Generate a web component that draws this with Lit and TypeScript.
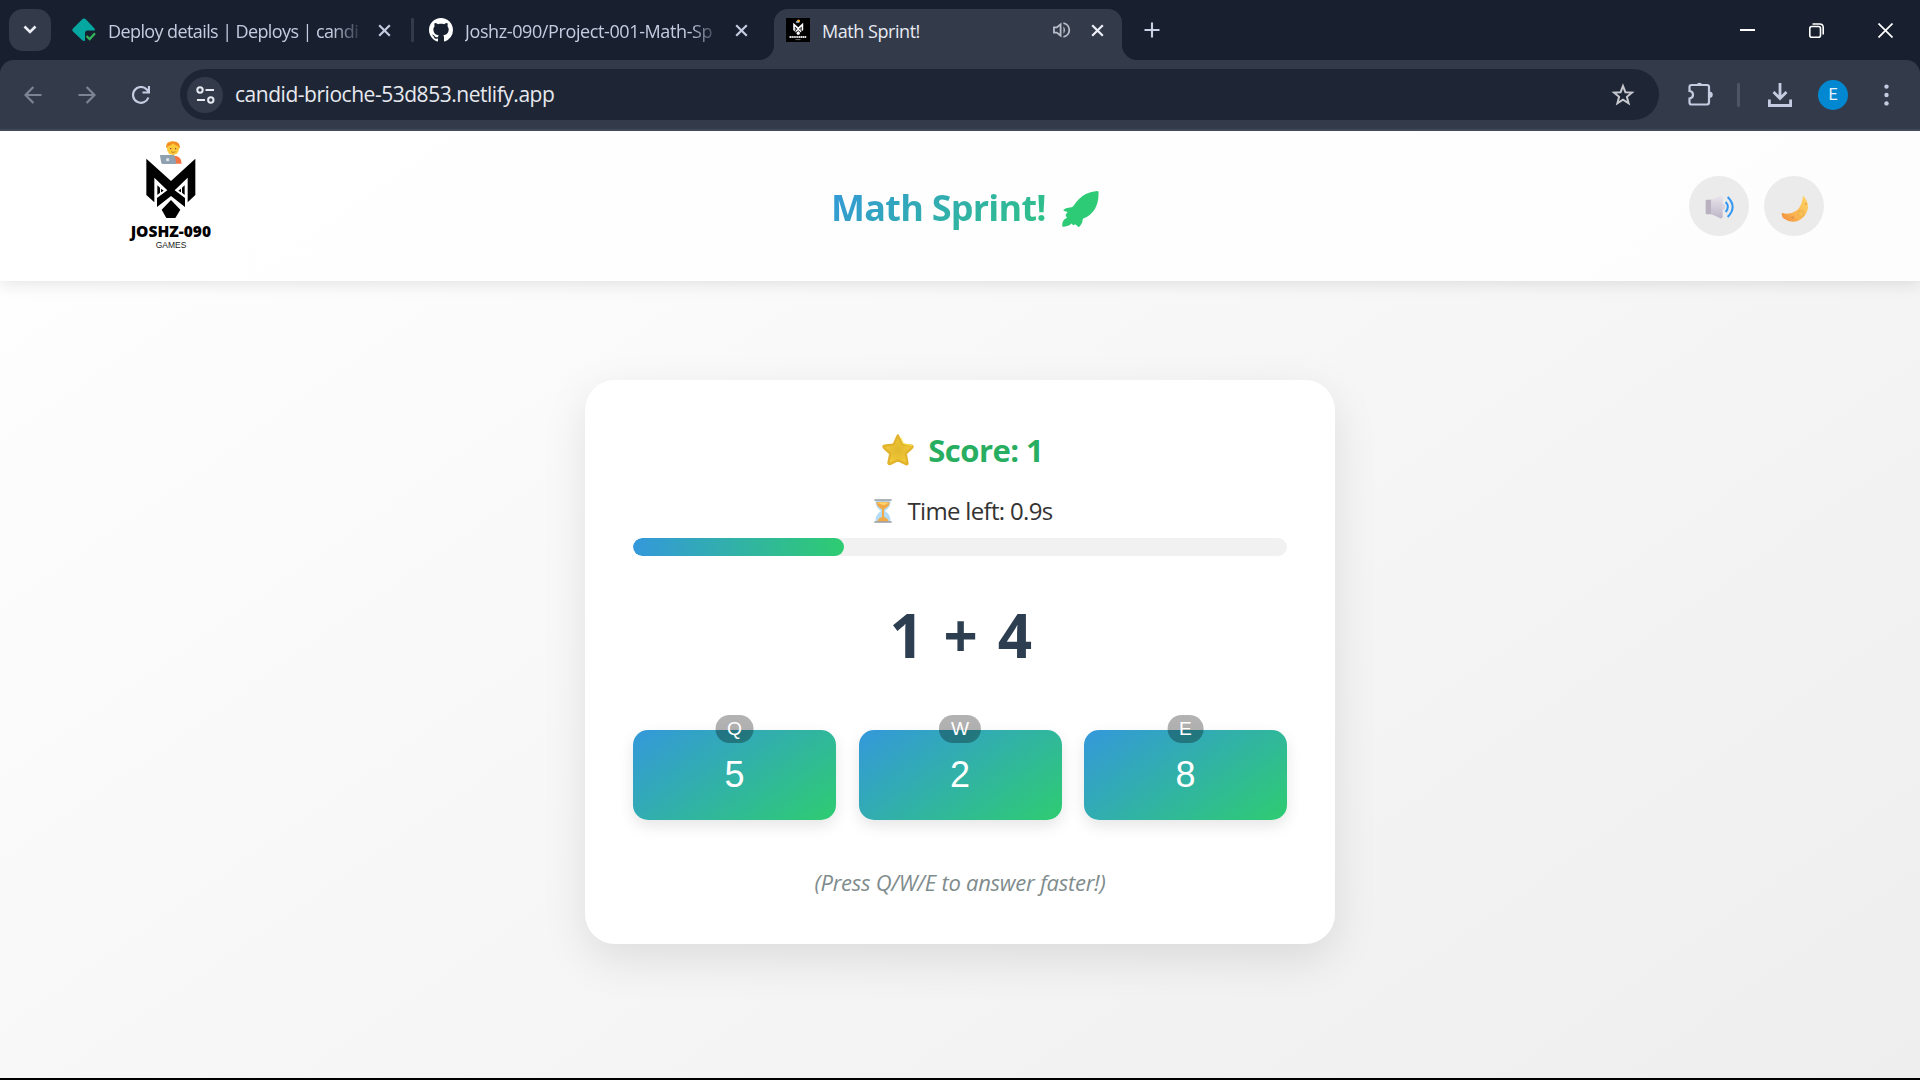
import { LitElement, html, css, svg } from "lit";
import { customElement, property } from "lit/decorators.js";
import { styleMap } from "lit/directives/style-map.js";

const wolf = svg`
  <path d="M109 86L183 153L256 86V195L233 217V143L194 181L225 204V231L183 198L141 231V204L172 181L133 143V217L109 195Z" fill="currentColor"/>
  <path d="M142 166L150 173V188L142 195ZM153 176L161 182L153 187ZM224 166L216 173V188L224 195ZM213 176L205 182L213 187Z" fill="currentColor"/>
  <path d="M183 210L211 239L196 264H169L155 239Z" fill="currentColor"/>
`;

@customElement("browser-tabs")
class BrowserTabs extends LitElement {
  static styles = css`
    :host { display: flex; height: 60px; background: #182030; color: #c5cbe0; align-items: center; font: 18px/30px "Open Sans", "Noto Sans", sans-serif; }
    svg { display: block; flex: none; }
    .search { width: 42px; height: 42px; border-radius: 14px; background: #333b4b; margin-left: 9px; display: grid; place-items: center; color: #eceef5; }
    .tab { display: flex; align-items: center; height: 60px; box-sizing: border-box; }
    .first { margin-left: 21px; width: 339px; }
    .second { margin-left: 15px; width: 345px; }
    .label { white-space: nowrap; margin-left: 12px; width: 254px; letter-spacing: -0.6px; padding-top: 2px; }
    .second .label { letter-spacing: -0.39px; }
    .fade { -webkit-mask-image: linear-gradient(90deg, #000 225px, transparent 256px); mask-image: linear-gradient(90deg, #000 225px, transparent 256px); }
    .x { margin-left: 16px; }
    .rule { width: 3px; height: 24px; background: #333b4b; border-radius: 1px; }
    .active { align-self: flex-end; height: 51px; width: 348px; background: #333b4b; border-radius: 14px 14px 0 0; padding: 0 0 9px 12px; color: #e8eaf2; position: relative; }
    .active .label { width: 231px; letter-spacing: -0.45px; margin-left: 12px; }
    .active .x { margin-left: 20px; }
    .active::before, .active::after { content: ""; position: absolute; bottom: 0; width: 15px; height: 15px; }
    .active::before { left: -15px; background: radial-gradient(circle at 0 0, transparent 14.5px, #333b4b 15.5px); }
    .active::after { right: -15px; background: radial-gradient(circle at 100% 0, transparent 14.5px, #333b4b 15.5px); }
    .plus { margin-left: 22px; }
    .window { margin-left: auto; margin-right: 27px; display: flex; gap: 54px; color: #fff; }
  `;
  private close() {
    return svg`<svg class="x" width="13" height="13" viewBox="0 0 13 13"><path d="M1.2 1.2L11.8 11.8M11.8 1.2L1.2 11.8" stroke="currentColor" stroke-width="2.2" fill="none"/></svg>`;
  }
  render() {
    return html`
      <div class="search"><svg width="14" height="10" viewBox="0 0 14 10"><path d="M1.5 1.5L7 7L12.5 1.5" fill="none" stroke="currentColor" stroke-width="2.6"/></svg></div>
      <div class="tab first">
        <svg width="24" height="24" viewBox="0 0 24 24">
          <path d="M10 1.6Q12 -.4 14 1.6L22.5 10.5Q23.4 12 22.5 12.5H15Q13 12.5 13 15V22.5Q12 23.8 10 22L1 13.6Q-.4 12 1 10.4Z" fill="#05a7a0"/>
          <path d="M14.5 18L17.7 21L23 15.2" stroke="#31b45a" stroke-width="2.3" fill="none"/>
        </svg>
        <span class="label fade">Deploy details | Deploys | candi</span>
        ${this.close()}
      </div>
      <div class="rule"></div>
      <div class="tab second">
        <svg width="24" height="24" viewBox="0 0 16 16"><path fill="#fff" d="M8 0C3.58 0 0 3.58 0 8c0 3.54 2.29 6.53 5.47 7.59.4.07.55-.17.55-.38 0-.19-.01-.82-.01-1.49-2.01.37-2.53-.49-2.69-.94-.09-.23-.48-.94-.82-1.13-.28-.15-.68-.52-.01-.53.63-.01 1.08.58 1.23.82.72 1.21 1.87.87 2.33.66.07-.52.28-.87.51-1.07-1.78-.2-3.64-.89-3.64-3.95 0-.87.31-1.59.82-2.15-.08-.2-.36-1.02.08-2.12 0 0 .67-.21 2.2.82.64-.18 1.32-.27 2-.27s1.36.09 2 .27c1.53-1.04 2.2-.82 2.2-.82.44 1.1.16 1.92.08 2.12.51.56.82 1.27.82 2.15 0 3.07-1.87 3.75-3.65 3.95.29.25.54.73.54 1.48 0 1.07-.01 1.93-.01 2.2 0 .21.15.46.55.38A8.01 8.01 0 0 0 16 8c0-4.42-3.58-8-8-8"/></svg>
        <span class="label fade">Joshz-090/Project-001-Math-Sp</span>
        ${this.close()}
      </div>
      <div class="tab active">
        <svg width="24" height="24" viewBox="0 0 24 24" color="#fff">
          <rect width="24" height="24" fill="#000"/>
          <circle cx="12.5" cy="3" r="1.6" fill="#fbb52d"/><path d="M10 3.2h3v1.6h-3z" fill="#9bb7c8"/>
          <g transform="translate(-.2 -1.2) scale(.068)">${wolf}</g>
          <path d="M3.5 19H20.5" stroke="#ddd" stroke-width="1.8" stroke-dasharray="1.5 .4"/><path d="M9.500 21.600H14.500" stroke="#888" stroke-width=".8"/>
        </svg>
        <span class="label">Math Sprint!</span>
        <svg width="18" height="18" viewBox="0 0 19 18" fill="none" stroke="#b9becb" stroke-width="1.900"><path d="M1 6.300H4L8 3V15L4 11.700H1Z"/><path d="M11 5Q14.500 9 11 13Z" fill="#b9becb" stroke="none"/><path d="M11 1.700A7.400 7.400 0 0 1 11 16.300"/></svg>
        <svg width="13" height="13" viewBox="0 0 13 13" class="x"><path d="M1.200 1.200L11.800 11.800M11.800 1.200L1.200 11.800" stroke="#eef0f7" stroke-width="2.200"/></svg>
      </div>
      <svg class="plus" width="16" height="16" viewBox="0 0 16 16"><path d="M8 .500V15.500M.500 8H15.500" stroke="#cbd1e5" stroke-width="2.100"/></svg>
      <div class="window">
        <svg width="15" height="15" viewBox="0 0 15 15"><path d="M0 7H15" stroke="currentColor" stroke-width="2"/></svg>
        <svg width="15" height="15" viewBox="0 0 15 15" fill="none" stroke="currentColor" stroke-width="1.600"><rect x=".8" y="3.500" width="10.700" height="10.700" rx="2"/><path d="M3.500 1H10.500Q14.200 1 14.200 4.500V11.500"/></svg>
        <svg width="15" height="15" viewBox="0 0 15 15"><path d="M.500 .500L14.500 14.500M14.500 .500L.500 14.500" stroke="currentColor" stroke-width="1.700"/></svg>
      </div>
    `;
  }
}

@customElement("browser-toolbar")
class BrowserToolbar extends LitElement {
  static styles = css`
    :host { display: block; background: #182030; }
    svg { display: block; flex: none; }
    .bar { height: 71px; box-sizing: border-box; border-bottom: 2px solid #424a59; background: #333b4b; border-radius: 14px 14px 0 0; display: flex; align-items: center; color: #c5cbe0; padding-left: 24px; }
    .nav { display: flex; gap: 36px; width: 156px; }
    .dim { color: #7d8494; }
    .omnibox { width: 1479px; height: 51px; border-radius: 26px; background: #1e2636; display: flex; align-items: center; box-sizing: border-box; padding: 0 24px 0 7px; }
    .site { width: 36px; height: 36px; border-radius: 50%; background: #333b4b; display: grid; place-items: center; color: #e8eaf2; }
    .url { flex: 1; margin-left: 12px; padding-bottom: 2px; font: 21px/30px "Open Sans", "Noto Sans", sans-serif; color: #e7e9ee; letter-spacing: -0.47px; }
    .puzzle { margin-left: 29px; margin-bottom: 3px; }
    .sep { width: 3px; height: 24px; background: #4d5565; margin-left: 24px; border-radius: 1px; }
    .down { margin-left: 28px; }
    .avatar { width: 30px; height: 30px; border-radius: 50%; background: #0288d1; color: #e6f3fa; margin-left: 26px; text-align: center; font: 16px/30px Roboto, sans-serif; }
    .dots { margin-left: 36px; }
  `;
  render() {
    return html`<div class="bar">
      <div class="nav">
        <svg class="dim" width="18" height="18" viewBox="0 0 18 18" fill="none" stroke="currentColor" stroke-width="2.200"><path d="M17.500 9H1.800M9.400 1L1.500 9L9.400 17"/></svg>
        <svg class="dim" width="18" height="18" viewBox="0 0 18 18" fill="none" stroke="currentColor" stroke-width="2.200"><path d="M.500 9H16.200M8.600 1L16.500 9L8.600 17"/></svg>
        <svg width="18" height="18" viewBox="0 0 18 18" fill="none" stroke="currentColor" stroke-width="2.200"><path d="M16.400 11.500A7.900 7.900 0 1 1 14.800 3.600L17 6M17 0V6.500H10.500"/></svg>
      </div>
      <div class="omnibox">
        <div class="site"><svg width="19" height="18" viewBox="0 0 19 18" fill="none" stroke="currentColor" stroke-width="2"><circle cx="4" cy="4" r="2.700"/><path d="M9.500 4H18M1 14H9"/><circle cx="14.800" cy="14" r="2.700"/></svg></div>
        <span class="url">candid-brioche-53d853.netlify.app</span>
        <svg width="24" height="24" viewBox="0 0 24 24" fill="none" stroke="#c7c8ce" stroke-width="2"><path d="M12 3L14.400 9.200L21 9.600L15.900 13.800L17.600 20.300L12 16.700L6.400 20.300L8.100 13.800L3 9.600L9.600 9.200Z"/></svg>
      </div>
      <svg class="puzzle" width="25" height="26" viewBox="0 0 25 26"><path d="M3.500 5H19Q21 5 21 7V22Q21 24.500 19 24.500H3.500Q1.500 24.500 1.500 22.500V18.500Q5 18 5 14.700Q5 11.500 1.500 11V7Q1.500 5 3.500 5Z" fill="none" stroke="currentColor" stroke-width="2.200"/><path d="M8.500 5A3.200 3.600 0 0 1 14.500 5ZM21 11.500A3.700 3.200 0 0 1 21 18Z" fill="currentColor"/></svg>
      <div class="sep"></div>
      <svg class="down" width="24" height="24" viewBox="0 0 24 24" fill="none" stroke="currentColor" stroke-width="2.800"><path d="M12 0V15M5.500 9L12 15.500L18.500 9M1.400 16.500V22.500H22.600V16.500"/></svg>
      <div class="avatar">E</div>
      <svg class="dots" width="5" height="22" viewBox="0 0 5 22" fill="currentColor"><circle cx="2.500" cy="2.600" r="2.200"/><circle cx="2.500" cy="11" r="2.200"/><circle cx="2.500" cy="19.400" r="2.200"/></svg>
    </div>`;
  }
}

@customElement("game-header")
class GameHeader extends LitElement {
  static styles = css`
    :host { display: grid; grid-template-columns: 1fr auto 1fr; align-items: center; height: 150px; box-sizing: border-box; background: linear-gradient(145deg, #fff, #fdfdfd); box-shadow: 0 3px 15px rgba(0, 0, 0, 0.1); padding: 0 96px 0 110px; z-index: 1; }
    svg { display: block; }
    .logo { width: 120px; align-self: start; color: #000; }
    .name { font: 800 45px "Open Sans"; }
    .sub { font: 29px "Liberation Sans"; fill: #222; }
    .title { display: flex; align-items: center; gap: 16px; font: bold 36px/48px "Open Sans", "Noto Sans", sans-serif; letter-spacing: -0.75px; margin: 4px 4px 0 0; }
    .word { background: linear-gradient(135deg, #3498db, #2ecc71); background-size: 268px 100%; -webkit-background-clip: text; background-clip: text; color: transparent; white-space: nowrap; }
    .rocket { margin-top: 1px; }
    .actions { display: flex; gap: 15px; justify-self: end; }
    .round { width: 60px; height: 60px; border-radius: 50%; background: #ebebeb; display: grid; place-items: center; }
    .speaker { margin: 2px 0 0 2px; }
    .moon { margin: 4px 0 0 2px; }
  `;
  render() {
    return html`
      <svg class="logo" width="120" height="125" viewBox="0 3 360 375">
        <path d="M168 53Q167 34 188 34Q211 34 210 55Z" fill="#f59a24"/><circle cx="189" cy="57" r="18" fill="#fcc93d"/><path d="M171 50Q184 46 190 40Q197 48 208 50Q207 36 190 35Q173 36 171 50Z" fill="#f28b20"/>
        <circle cx="182" cy="56" r="2" fill="#684221"/><circle cx="197" cy="56" r="2" fill="#684221"/><path d="M183 65Q190 70 196 65" fill="none" stroke="#a8581c" stroke-width="2"/>
        <path d="M185 78Q214 74 215 101H188Z" fill="#f47442"/><path d="M150 78Q149 75 153 75H190Q193 75 194 79L199 99Q199 102 196 102H158Q155 102 154 99Z" fill="#8fa1b1"/><circle cx="173" cy="89" r="5" fill="#dce5ec"/>
        ${wolf}
        <text class="name" x="62" y="320" textLength="241" lengthAdjust="spacingAndGlyphs">JOSHZ-090</text>
        <text class="sub" x="137" y="355" textLength="92" lengthAdjust="spacingAndGlyphs">GAMES</text>
      </svg>
      <div class="title"><span class="word">Math Sprint!</span>
        <svg class="rocket" width="37" height="36" viewBox="0 0 106 104"><path d="M105 3Q105 0 101 0Q84 2 68 9Q48 20 32 44Q28 48 22 48Q10 49 3 55Q4 58 16 61Q11 66 10 71L14 77Q4 80 1 90L0 102Q3 105 14 101Q22 100 27 94L32 99L38 96L47 104Q51 104 58 90L60 80Q82 72 95 51Q106 31 105 3Z" fill="#2ecb76"/></svg>
      </div>
      <div class="actions">
        <div class="round"><svg class="speaker" width="30" height="24" viewBox="0 0 90 72"><defs><linearGradient id="s" x2="0" y2="1"><stop stop-color="#e9e4ec"/><stop offset="1" stop-color="#bcb5c7"/></linearGradient></defs><rect x="2" y="14" width="24" height="44" rx="4" fill="#b9b1bf"/><path d="M18 16L46 2Q53 0 53 8V64Q53 72 46 70L18 57Z" fill="url(#s)"/><ellipse cx="54" cy="36" rx="6" ry="9" fill="#d8d3df"/><path d="M62 21Q75 35 62 51M68 6Q98 36 68 66" fill="none" stroke="#3397f2" stroke-width="6"/></svg></div>
        <div class="round"><svg class="moon" width="28" height="27" viewBox="0 0 84 80"><defs><linearGradient id="m" x1="1" y1="0" x2="0" y2="1"><stop stop-color="#ffd767"/><stop offset=".6" stop-color="#fbb552"/><stop offset="1" stop-color="#f08a3a"/></linearGradient></defs><path d="M66 1Q94 31 70 63Q41 93 7 69Q0 61 3 53Q25 61 47 46Q64 32 66 1Z" fill="url(#m)"/><circle cx="60" cy="55" r="9" fill="#f8bf55" stroke="#e6a548" stroke-width="2"/><circle cx="35" cy="67" r="4" fill="#e0924a"/><circle cx="74" cy="26" r="3.500" fill="#eda945"/></svg></div>
      </div>
    `;
  }
}

@customElement("answer-button")
class AnswerButton extends LitElement {
  @property() key = "";
  @property() value = "";
  static styles = css`
    :host { display: block; }
    .answer { position: relative; height: 90px; border-radius: 15px; background: linear-gradient(145deg, #3498db, #2ecc71); box-shadow: 0 6px 15px rgba(0, 0, 0, 0.1); color: #fff; font: 36px/89px "Liberation Sans", Arial, sans-serif; text-align: center; }
    .key { position: absolute; top: -15px; left: 50%; transform: translateX(-50%); height: 28px; padding: 0 12px; border-radius: 14px; background: rgba(0, 0, 0, 0.3); font-size: 19.2px; line-height: 27px; }
  `;
  render() {
    return html`<div class="answer"><span class="key">${this.key}</span>${this.value}</div>`;
  }
}

@customElement("game-card")
class GameCard extends LitElement {
  private timeFraction = 0.3227;
  private answers = [["Q", "5"], ["W", "2"], ["E", "8"]];
  static styles = css`
    :host { display: flex; flex-direction: column; width: 750px; height: 564px; box-sizing: border-box; padding: 48px; background: #fff; border-radius: 30px; box-shadow: 0 15px 45px rgba(0, 0, 0, 0.1); font-family: "Open Sans", "Noto Sans", sans-serif; }
    svg { display: block; }
    .score { display: flex; justify-content: center; align-items: center; gap: 13.5px; height: 46px; padding-left: 4px; font-size: 31px; font-weight: bold; line-height: 46px; color: #27ae60; letter-spacing: -0.55px; margin-top: -1px; }
    .time { display: flex; justify-content: center; align-items: center; gap: 16px; margin-top: 20px; height: 36px; padding-left: 6px; font-size: 24px; line-height: 36px; color: #333; letter-spacing: -0.68px; }
    .track { height: 18px; margin-top: 9px; flex: none; border-radius: 9px; background: #f1f1f1; overflow: hidden; }
    .fill { height: 18px; border-radius: 9px; background: linear-gradient(90deg, #3498db, #2ecc71); }
    .question { height: 84px; line-height: 84px; margin-top: 37px; padding-left: 3px; text-align: center; font-size: 60px; font-weight: bold; color: #2c3e50; letter-spacing: 1.5px; word-spacing: 1.3px; }
    .answers { display: grid; grid-template-columns: repeat(3, 1fr); gap: 22.5px; margin-top: 53px; }
    .hint { margin-top: 46px; line-height: 32px; text-align: center; font-size: 22px; font-style: italic; color: #7f8c8d; letter-spacing: -0.25px; }
  `;
  render() {
    return html`
      <div class="score">
        <svg width="34" height="34" viewBox="0 0 99 99"><defs><radialGradient id="g"><stop stop-color="#dfb92c"/><stop offset=".6" stop-color="#edc235"/><stop offset="1" stop-color="#f4cf3b"/></radialGradient></defs><path d="M49 7L60 30Q62 33 67 34L89 37Q94 39 90 43L72 60L77 88Q77 93 72 90L49 79L27 90Q21 92 22 86L27 60L9 43Q5 39 10 37L33 34Q37 33 39 29Z" fill="url(#g)" stroke="#e2b32d" stroke-width="7" stroke-linejoin="round"/><path d="M57 13L66 31L91 38" fill="none" stroke="#fbe54a" stroke-width="3"/></svg>
        <span>Score: 1</span>
      </div>
      <div class="time">
        <svg width="18" height="24" viewBox="0 0 54 72"><path d="M5 4H49V14Q48 25 33 36Q48 47 49 58V68H5V58Q6 47 21 36Q6 25 5 14Z" fill="#b5dcf7"/><path d="M7 10Q26 6 47 10Q47 22 30 31V54Q42 58 44 68H10Q12 58 24 54V31Q7 22 7 10Z" fill="#f0aa47"/><path d="M10 12Q27 7 44 12L30 19Z" fill="#ffd26b"/><path d="M1 3H53M1 69H53" stroke="#969ca3" stroke-width="5"/></svg>
        <span>Time left: 0.9s</span>
      </div>
      <div class="track"><div class="fill" style=${styleMap({ width: `${this.timeFraction * 100}%` })}></div></div>
      <div class="question">1 + 4</div>
      <div class="answers">${this.answers.map(([k, v]) => html`<answer-button .key=${k} .value=${v}></answer-button>`)}</div>
      <div class="hint">(Press Q/W/E to answer faster!)</div>
    `;
  }
}

@customElement("app-root")
class AppRoot extends LitElement {
  static styles = css`
    :host { display: flex; flex-direction: column; width: 1920px; height: 1080px; overflow: hidden; background: #000; }
    .page { height: 947px; display: flex; flex-direction: column; overflow: hidden; background: linear-gradient(145deg, #fff, #eee); }
    .stage { display: flex; justify-content: center; padding-top: 99px; }
  `;
  render() {
    return html`
      <browser-tabs></browser-tabs>
      <browser-toolbar></browser-toolbar>
      <div class="page">
        <game-header></game-header>
        <div class="stage"><game-card></game-card></div>
      </div>
    `;
  }
}
